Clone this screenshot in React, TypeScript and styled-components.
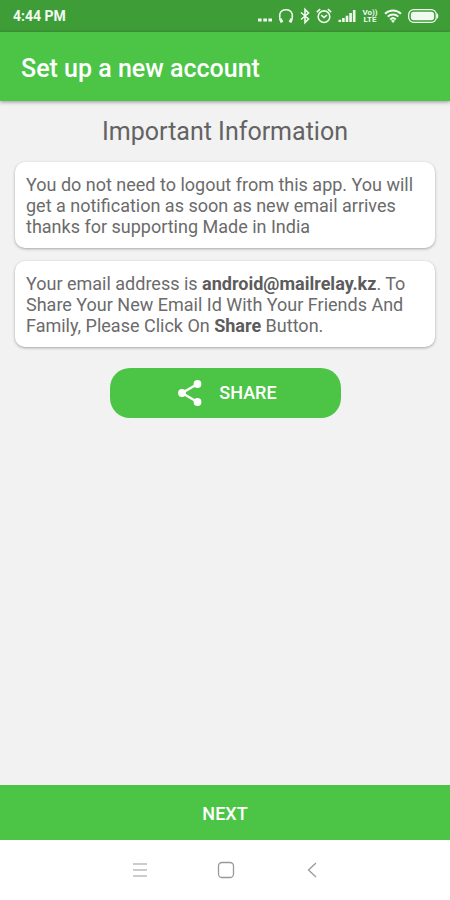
import React from "react";
import styled, { createGlobalStyle } from "styled-components";

const GlobalStyle = createGlobalStyle`
  *, *::before, *::after { box-sizing: border-box; }
  body {
    margin: 0;
    background: #f2f2f2;
    font-family: Roboto, "Liberation Sans", sans-serif;
  }
  h1, h2, p { margin: 0; }
`;

const Screen = styled.div`
  min-height: 100vh;
  display: flex;
  flex-direction: column;
  background: #f2f2f2;
`;

const StatusBar = styled.div`
  display: flex;
  align-items: center;
  justify-content: space-between;
  height: 32px;
  padding: 0 11px 0 13px;
  background: #3e9d37;
  color: #f1faf0;
`;

const Clock = styled.time`
  font-size: 14px;
  line-height: 18px;
  font-weight: 700;
`;

const StatusIcons = styled.div`
  display: flex;
  align-items: center;
  gap: 6px;

  svg { display: block; }
`;

const AppBar = styled.header`
  display: flex;
  align-items: center;
  height: 69px;
  padding: 4px 21px 0;
  background: #4cc446;
  box-shadow: 0 1px 4px rgba(0, 0, 0, 0.4);
`;

const Title = styled.h1`
  color: #ffffff;
  font-size: 25px;
  line-height: 32px;
  font-weight: 500;
`;

const Content = styled.main`
  flex: 1;
  display: flex;
  flex-direction: column;
  gap: 13px;
  padding: 14px 15px;
`;

const Heading = styled.h2`
  color: #636363;
  font-size: 25px;
  line-height: 34px;
  font-weight: 400;
  text-align: center;
`;

const Card = styled.p`
  padding: 12px 11px 11px;
  border-radius: 10px;
  background: #ffffff;
  box-shadow: 0 1px 3px rgba(0, 0, 0, 0.32);
  color: #6b6b6b;
  font-size: 18px;
  line-height: 21px;
`;

const Strong = styled.strong`
  font-weight: 700;
  color: #5c5c5c;
`;

const ShareButton = styled.button`
  align-self: center;
  display: flex;
  align-items: center;
  justify-content: center;
  gap: 16px;
  width: 55%;
  min-width: 230px;
  height: 50px;
  margin-top: 8px;
  padding: 0 0 0 4px;
  border: 0;
  border-radius: 20px;
  background: #4cc446;
  color: #ffffff;
  font: 500 18px/24px Roboto, "Liberation Sans", sans-serif;
  cursor: pointer;
`;

const NextButton = styled.button`
  height: 55px;
  padding: 2px 0 0;
  border: 0;
  background: #4cc446;
  color: #ffffff;
  font: 500 18px/24px Roboto, "Liberation Sans", sans-serif;
  cursor: pointer;
`;

const NavBar = styled.nav`
  display: flex;
  align-items: center;
  justify-content: center;
  gap: 62px;
  height: 60px;
  padding-left: 2px;
  background: #ffffff;
`;

const NavButton = styled.button`
  display: grid;
  place-items: center;
  width: 24px;
  height: 24px;
  padding: 0;
  border: 0;
  background: none;
  color: #999999;
  cursor: pointer;
`;

const MoreIcon = () => (
  <svg width="14" height="18" viewBox="0 0 14 18" fill="currentColor" aria-hidden="true">
    <path d="M0 11.500h3.600v3H0zM5.300 11.500h3.600v3H5.300zM10.400 11.500H14v3h-3.600z" />
  </svg>
);

const HeadphonesIcon = () => (
  <svg width="16" height="18" viewBox="0 0 16 18" fill="none" stroke="currentColor" aria-hidden="true">
    <path d="M3.400 15C.4 10 .8 2.800 8 2.800S15.600 10 12.600 15" strokeWidth="1.500" />
    <path d="M2.400 11.800L4 15.400M13.600 11.800L12 15.400" strokeWidth="2.800" />
  </svg>
);

const BluetoothIcon = () => (
  <svg width="10" height="18" viewBox="0 0 10 18" fill="none" stroke="currentColor" strokeWidth="1.600" aria-hidden="true">
    <path d="M1 5.500l7.500 6.500L5 15.500v-13L8.500 6 1 12.500" />
  </svg>
);

const AlarmIcon = () => (
  <svg width="16" height="18" viewBox="0 0 16 18" fill="none" stroke="currentColor" strokeWidth="1.600" aria-hidden="true">
    <circle cx="8" cy="9.700" r="5.800" />
    <path d="M5.200 8.200L8 10.500l3-2.300M.8 5.200L4.200 2.200M15.200 5.200L11.800 2.200" />
  </svg>
);

const SignalIcon = () => (
  <svg width="18" height="18" viewBox="0 0 18 18" fill="currentColor" aria-hidden="true">
    <path d="M.5 12.800h2.600V15H.5zM4.100 11h2.600v4H4.100zM7.700 8.800h2.600V15H7.700zM11.300 6h2.600v9h-2.600zM14.900 3h2.600v12h-2.600z" />
  </svg>
);

const Volte = styled.span`
  display: flex;
  flex-direction: column;
  width: 16px;
  font-size: 8px;
  line-height: 7px;
  font-weight: 700;
  text-align: center;
`;

const WifiIcon = () => (
  <svg width="18" height="18" viewBox="0 0 18 18" fill="none" stroke="currentColor" strokeWidth="2" aria-hidden="true">
    <path d="M1 6.800c4.500-4.300 11.500-4.300 16 0M3.700 9.600c3-2.900 7.600-2.900 10.600 0M6.200 12.400c1.600-1.500 4-1.500 5.600 0" />
    <path d="M9 16l-2-2.300c1.200-1 2.800-1 4 0z" fill="currentColor" stroke="none" />
  </svg>
);

const BatteryIcon = () => (
  <svg width="31" height="18" viewBox="0 0 31 18" aria-hidden="true">
    <rect x="0.700" y="2.700" width="27.600" height="12.600" rx="5" fill="none" stroke="currentColor" strokeWidth="1.300" />
    <rect x="2.900" y="4.800" width="23.200" height="8.400" rx="3" fill="currentColor" />
    <path d="M28.800 6c2 .8 2 5.200 0 6z" fill="currentColor" />
  </svg>
);

const ShareIcon = () => (
  <svg width="26" height="28" viewBox="0 0 26 28" fill="currentColor" aria-hidden="true">
    <path d="M20.500 5L5 14l15.500 9" fill="none" stroke="currentColor" strokeWidth="2.400" />
    <circle cx="20.500" cy="5" r="3.900" />
    <circle cx="5" cy="14" r="3.900" />
    <circle cx="20.500" cy="23" r="3.900" />
  </svg>
);

const RecentsIcon = () => (
  <svg width="16" height="16" viewBox="0 0 16 16" fill="none" stroke="currentColor" strokeWidth="1.200" aria-hidden="true">
    <path d="M1 2h14M1 8h14M1 14h14" />
  </svg>
);

const HomeIcon = () => (
  <svg width="18" height="18" viewBox="0 0 18 18" fill="none" stroke="currentColor" strokeWidth="1.300" aria-hidden="true">
    <rect x="1.500" y="1.500" width="15" height="15" rx="3.500" />
  </svg>
);

const BackIcon = () => (
  <svg width="10" height="16" viewBox="0 0 10 16" fill="none" stroke="currentColor" strokeWidth="1.300" aria-hidden="true">
    <path d="M9 1L1.500 8 9 15" />
  </svg>
);

export default function App() {
  return (
    <Screen>
      <GlobalStyle />
      <StatusBar>
        <Clock>4:44 PM</Clock>
        <StatusIcons>
          <MoreIcon />
          <HeadphonesIcon />
          <BluetoothIcon />
          <AlarmIcon />
          <SignalIcon />
          <Volte>
            <span>Vo))</span>
            <span>LTE</span>
          </Volte>
          <WifiIcon />
          <BatteryIcon />
        </StatusIcons>
      </StatusBar>
      <AppBar>
        <Title>Set up a new account</Title>
      </AppBar>
      <Content>
        <Heading>Important Information</Heading>
        <Card>
          You do not need to logout from this app. You will get a notification as soon as new email
          arrives thanks for supporting Made in India
        </Card>
        <Card>
          Your email address is <Strong>android@mailrelay.kz</Strong>. To Share Your New Email Id
          With Your Friends And Family, Please Click On <Strong>Share</Strong> Button.
        </Card>
        <ShareButton type="button">
          <ShareIcon />
          SHARE
        </ShareButton>
      </Content>
      <NextButton type="button">NEXT</NextButton>
      <NavBar aria-label="System navigation">
        <NavButton type="button" aria-label="Recent apps">
          <RecentsIcon />
        </NavButton>
        <NavButton type="button" aria-label="Home">
          <HomeIcon />
        </NavButton>
        <NavButton type="button" aria-label="Back">
          <BackIcon />
        </NavButton>
      </NavBar>
    </Screen>
  );
}
